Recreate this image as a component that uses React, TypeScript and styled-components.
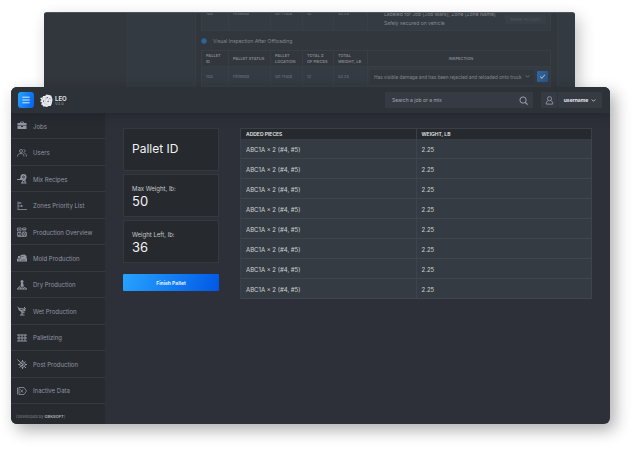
import React from "react";
import styled, { createGlobalStyle } from "styled-components";

const GlobalStyle = createGlobalStyle`
  *, *::before, *::after { box-sizing: border-box; }
  body {
    margin: 0;
    background: #fff;
    font-family: Inter, "Open Sans", sans-serif;
    color: #c9ccd1;
  }
  button, input, select { font-family: inherit; margin: 0; }
  button { cursor: pointer; }
`;

const Stage = styled.div`
  min-height: 100vh;
  display: flex;
  flex-direction: column;
  padding: 12px 25px 26px 11px;
`;

/* ---------- rear window ---------- */

const RearWindow = styled.section`
  height: 75px;
  margin: 0 35px 0 33px;
  display: grid;
  grid-template-columns: 82px 69px minmax(0, 1fr) 17px;
  grid-template-rows: minmax(0, 1fr);
  overflow: hidden;
  border-radius: 3px 3px 0 0;
  border-top: 1px solid #50545a;
  background: #32363d;
  color: #7a7f86;
  box-shadow: 4px 6px 16px rgba(0, 0, 0, 0.24);
`;

const RearPane = styled.div<{ $tinted?: boolean }>`
  background: ${(p) => (p.$tinted ? "#333a41" : "#32363d")};
`;

const RearDialog = styled.div`
  display: flex;
  flex-direction: column;
  justify-content: flex-end;
  padding: 0 6px 0 5px;
  border-left: 1px solid #383e45;
  border-right: 1px solid #383e45;
`;

const RearTable = styled.table`
  width: 100%;
  flex: none;
  table-layout: fixed;
  border-collapse: collapse;
  font-size: 5px;
  line-height: 6px;
`;

const RearHead = styled.th<{ $center?: boolean }>`
  height: 16px;
  padding: 0 0 0 4px;
  border: 1px solid #393e45;
  font-size: 4px;
  font-weight: 600;
  text-align: ${(p) => (p.$center ? "center" : "left")};
  color: #83888e;
`;

const RearCell = styled.td<{ $tall?: boolean }>`
  height: ${(p) => (p.$tall ? 34 : 20)}px;
  padding: 0 2px 0 4px;
  background: #343b42;
  border: 1px solid #393f46;
  font-size: 4px;
`;

const Notes = styled.div`
  display: flex;
  align-items: center;
  justify-content: space-between;
  padding: 11px 2px 0 12px;
`;

const NoteList = styled.ul`
  margin: 0;
  padding: 0;
  list-style: none;
  font-size: 5px;
  line-height: 9px;
  color: #858a90;
`;

const MarkButton = styled.button`
  width: 41px;
  height: 9px;
  padding: 0;
  border: 0;
  border-radius: 1px;
  background: #393f46;
  color: #545a61;
  font-size: 4px;
  line-height: 9px;
`;

const StepLabel = styled.label`
  flex: none;
  height: 19px;
  display: flex;
  align-items: center;
  gap: 6px;
  font-size: 5px;
  color: #858a90;
`;

const StepCheck = styled.input`
  appearance: none;
  width: 6px;
  height: 6px;
  margin: 0;
  border-radius: 50%;
  background: #3c6288;
  border: 1px solid #245a92;
`;

const Decision = styled.div`
  display: flex;
  align-items: center;
  gap: 3px;
  margin-left: -2px;
`;

const DamageField = styled.label`
  flex: 1;
  min-width: 0;
  height: 14px;
  display: flex;
  align-items: center;
  padding: 0 4px;
  background: #32373e;
  border-radius: 1px;
  color: #7f848b;
`;

const DamageSelect = styled.select`
  appearance: none;
  flex: 1;
  min-width: 0;
  padding: 0;
  border: 0;
  background: transparent;
  color: inherit;
  font-family: Roboto, sans-serif;
  font-size: 5px;
  line-height: 8px;
`;

const ConfirmButton = styled.button`
  width: 11px;
  height: 11px;
  padding: 2px;
  display: flex;
  border: 0;
  border-radius: 1px;
  background: linear-gradient(110deg, #31669b, #2a5287);
  color: #a9b6c6;
`;

/* ---------- main window ---------- */

const MainWindow = styled.div`
  position: relative;
  flex: 1;
  display: flex;
  flex-direction: column;
  overflow: hidden;
  border-radius: 6px;
  background: #2d3038;
  box-shadow: 5px 6px 16px rgba(0, 0, 0, 0.32);
`;

const TopBar = styled.header`
  position: relative;
  height: 26px;
  display: flex;
  align-items: center;
  padding: 0 8px 0 7px;
  background: #2d3138;
  box-shadow: 0 2px 10px rgba(25, 28, 38, 0.5);
`;

const MenuButton = styled.button`
  width: 16px;
  height: 16px;
  padding: 4px;
  display: flex;
  border: 0;
  border-radius: 3px;
  background: linear-gradient(110deg, #27a2ff, #0560ea);
  color: #d6ebff;
`;

const Brand = styled.a`
  display: flex;
  align-items: center;
  gap: 2px;
  margin: 0 auto 0 6px;
  color: #dfe1e5;
  text-decoration: none;
`;

const BrandText = styled.span`
  display: flex;
  flex-direction: column;
  padding-top: 2px;
  font-size: 6px;
  font-weight: 700;
  line-height: 6px;
`;

const Version = styled.small`
  font-size: 4px;
  font-weight: 400;
  line-height: 4px;
  color: #8f939b;
`;

const SearchForm = styled.form`
  width: 148px;
  height: 16px;
  display: flex;
  align-items: center;
  margin-right: 8px;
  padding: 0 5px 0 7px;
  background: #363b43;
  border-radius: 1px;
`;

const SearchInput = styled.input`
  flex: 1;
  min-width: 0;
  padding: 0;
  border: 0;
  outline: 0;
  background: transparent;
  color: #c9ccd1;
  font-size: 5px;
  line-height: 8px;
  &::placeholder { color: #a4a8ae; opacity: 1; }
`;

const IconButton = styled.button`
  padding: 0;
  display: flex;
  border: 0;
  background: transparent;
  color: #a4a8af;
`;

const UserButton = styled.button`
  height: 16px;
  display: flex;
  align-items: center;
  padding: 0;
  border: 0;
  border-radius: 1px;
  background: #363b43;
  color: #e3e5e8;
  font-size: 5px;
  font-weight: 700;
`;

const Avatar = styled.span`
  width: 17px;
  height: 16px;
  display: grid;
  place-items: center;
  border-right: 1px solid #2f343b;
  color: #989ca4;
`;

const UserName = styled.span`
  width: 44px;
  display: flex;
  align-items: center;
  justify-content: center;
  gap: 3px;
`;

const Body = styled.div`
  flex: 1;
  display: grid;
  grid-template-columns: 94px minmax(0, 1fr);
`;

const Sidebar = styled.nav`
  display: flex;
  flex-direction: column;
  background: linear-gradient(#272a31, #272a2f 14px);
`;

const NavList = styled.ul`
  flex: 1;
  display: grid;
  grid-auto-rows: minmax(20px, 1fr);
  margin: 0;
  padding: 0;
  list-style: none;
`;

const NavItem = styled.li`
  display: flex;
  border-bottom: 1px solid #363a40;
`;

const NavLink = styled.a`
  flex: 1;
  display: flex;
  align-items: center;
  gap: 6px;
  padding: 1px 0 0 6px;
  color: #9195a2;
  font-size: 6px;
  text-decoration: none;
`;

const Credit = styled.footer`
  height: 20px;
  padding: 9px 0 0 5px;
  font-size: 4px;
  line-height: 8px;
  color: #80848c;
`;

const CreditLink = styled.a`
  color: #a4a7ae;
  font-weight: 700;
  text-decoration: none;
`;

const Content = styled.main`
  display: grid;
  grid-template-columns: 96px minmax(0, 1fr);
  align-items: start;
  gap: 21px;
  padding: 15px 18px;
`;

const Summary = styled.div`
  display: flex;
  flex-direction: column;
  gap: 3px;
`;

const Card = styled.section`
  height: 43px;
  display: flex;
  flex-direction: column;
  justify-content: center;
  padding: 0 8px;
  border: 1px solid #343940;
  background: #26292d;
`;

const CardTitle = styled.h1`
  margin: 0;
  padding-bottom: 2px;
  font-size: 12px;
  font-weight: 400;
  line-height: 14px;
  color: #f1f2f4;
`;

const CardLabel = styled.span`
  padding-top: 3px;
  font-size: 6px;
  line-height: 8px;
  color: #c7c9cd;
`;

const CardValue = styled.strong`
  font-size: 13px;
  font-weight: 400;
  line-height: 16px;
  color: #f1f2f4;
`;

const FinishButton = styled.button`
  height: 17px;
  margin-top: 8px;
  padding: 0;
  border: 0;
  border-radius: 1px;
  background: linear-gradient(110deg, #27a3ff, #0058e6);
  color: #e4f1ff;
  font-size: 5px;
  font-weight: 700;
`;

const Pieces = styled.table`
  width: 100%;
  table-layout: fixed;
  border-collapse: separate;
  border-spacing: 0;
  border-left: 1px solid #3a4047;
`;

const PiecesHead = styled.th`
  height: 11px;
  padding: 0 5px;
  border-top: 1px solid #3a4047;
  border-right: 1px solid #3a4047;
  background: #26292d;
  color: #e4e6e8;
  font-size: 5px;
  font-weight: 600;
  line-height: 6px;
  text-align: left;
`;

const PiecesCell = styled.td`
  height: 20px;
  padding: 2px 5px 0;
  border-right: 1px solid #3d444b;
  border-bottom: 1px solid #3f464d;
  background: #353b42;
  color: #d0d3d6;
  font-size: 6px;
  line-height: 8px;
`;

/* ---------- icons ---------- */

const Glyph = ({ size = 10, children }: { size?: number; children: React.ReactNode }) => (
  <svg
    width={size}
    height={size}
    viewBox="0 0 20 20"
    fill="none"
    stroke="currentColor"
    strokeWidth="1.6"
    aria-hidden="true"
  >
    {children}
  </svg>
);

const Chevron = () => (
  <Glyph size={5}>
    <path d="M3 6l7 7 7-7" strokeWidth="3" />
  </Glyph>
);

const Lion = () => (
  <svg width="13" height="13" viewBox="0 0 26 26" aria-hidden="true">
    <path
      fill="#e6e7ed"
      d="M0 8l5-1 1-3 4 0 3-3 5 1 4 1 2 4 1 5-1 5-1 4-2 3-4 0-3 2-4-1-4 0-1-3-3-1 2-4-4-2 3-3z"
    />
    <path
      fill="#4a4e59"
      d="M13 7l3-1 0 2-3 1zM19 8l2 1-1 2-1-1zM6 12l2 2-1 3-1-2zM15 14l3 0-1 2-2 0zM4 8l3 1-2 0z"
    />
    <path stroke="#a9acb6" fill="none" d="M10 7l1 3-1 3 2 3M17 10l0 3M8 18l3 1M12 20l3 1M21 14l1 3" />
  </svg>
);

const navigation: { label: string; icon: React.ReactNode }[] = [
  {
    label: "Jobs",
    icon: (
      <>
        <path d="M7 4V2h6v2" />
        <path d="M1 4h18v5H1zM1 10h7v2h4v-2h7v6H1z" fill="currentColor" stroke="none" />
      </>
    ),
  },
  {
    label: "Users",
    icon: (
      <>
        <circle cx="8" cy="6" r="3" />
        <path d="M1 17c0-4 3-6 7-6s6 2 6 6M13 3c4 0 4 6 0 6M15 11c3 0 4 3 4 6" />
      </>
    ),
  },
  {
    label: "Mix Recipes",
    icon: (
      <>
        <circle cx="13" cy="6" r="6" fill="currentColor" stroke="none" />
        <path d="M0 11h9M6 8l5 5M16 10v5M8 18h11M10 18l2-5h3l2 5" strokeWidth="2" />
        <circle cx="13" cy="6" r="2" stroke="#272a2f" />
      </>
    ),
  },
  {
    label: "Zones Priority List",
    icon: <path d="M2 1v17M2 4h7M2 10h10M2 17h18M6 2v4M9 8v4" />,
  },
  {
    label: "Production Overview",
    icon: (
      <>
        <path d="M1 2h7v6H1zM1 11h7v6H1zM11 2h7v3h-7zM11 8h7M11 11h3v6h-3zM16 11h3v6h-3zM1 19h18" />
        <path d="M3 5h3M3 14h3" />
      </>
    ),
  },
  {
    label: "Mold Production",
    icon: (
      <>
        <path d="M0 11h20v6H0zM7 4l8-1 4 3v5H7zM2 6h4v4H2z" fill="currentColor" stroke="none" />
        <path d="M9 7h4M3 14h3M8 14h9" stroke="#272a2f" strokeWidth="1" />
      </>
    ),
  },
  {
    label: "Dry Production",
    icon: (
      <>
        <circle cx="10" cy="3" r="3" fill="currentColor" stroke="none" />
        <path d="M8 6h4l2 7H7z" fill="currentColor" stroke="none" />
        <path d="M1 18l4-5 3 5M12 18l3-4 4 4M0 18h20M10 12v5" strokeWidth="2" />
      </>
    ),
  },
  {
    label: "Wet Production",
    icon: (
      <>
        <path d="M3 4l13 1 1 5-8 2-6-4z" fill="currentColor" stroke="none" />
        <path d="M1 2l5 4M14 2l4 4M10 11v7M6 18h9M9 14l6-1" strokeWidth="2" />
        <path d="M7 7l6 1" stroke="#272a2f" />
      </>
    ),
  },
  {
    label: "Palletizing",
    icon: <path d="M0 4h20M0 10h20M0 16h20M4 3v13M10 3v13M16 3v13" strokeWidth="2" />,
  },
  {
    label: "Post Production",
    icon: (
      <>
        <circle cx="11" cy="11" r="5.500" strokeWidth="2" />
        <path d="M11 2v4M11 16v4M2 11h4M16 11h4M17 5l-2 2M5 17l2-2M15 15l3 3M1 1l11 11M12 8v5H8" strokeWidth="2" />
      </>
    ),
  },
  {
    label: "Inactive Data",
    icon: <path d="M1 3v14M4 3h10l5 7-5 7H4zM7 7l5 6M12 7l-5 6" />,
  },
];

const pieces = Array.from({ length: 8 }, () => ({ name: "ABC1A × 2 (#4, #5)", weight: "2.25" }));

const RearColumns = () => (
  <colgroup>
    <col width="27" />
    <col width="42" />
    <col width="32" />
    <col width="31" />
    <col width="34" />
    <col />
  </colgroup>
);

const RearValues = ({ tall }: { tall?: boolean }) => (
  <>
    {["100", "Finished", "On Truck", "12", "52.25"].map((value) => (
      <RearCell key={value} $tall={tall}>
        {value}
      </RearCell>
    ))}
  </>
);

export default function App() {
  return (
    <Stage>
      <GlobalStyle />
      <RearWindow aria-label="Pallet inspection">
        <RearPane />
        <RearPane $tinted />
        <RearDialog>
          <RearTable>
            <RearColumns />
            <tbody>
              <tr>
                <RearValues tall />
                <RearCell $tall>
                  <Notes>
                    <NoteList>
                      <li>Labeled for Job [Job Mark], Zone [Zone Name]</li>
                      <li>Safely secured on vehicle</li>
                    </NoteList>
                    <MarkButton type="button">MARK AS LOST</MarkButton>
                  </Notes>
                </RearCell>
              </tr>
            </tbody>
          </RearTable>
          <StepLabel>
            <StepCheck type="checkbox" defaultChecked />
            Visual Inspection After Offloading
          </StepLabel>
          <RearTable>
            <RearColumns />
            <thead>
              <tr>
                <RearHead>PALLET<br />ID</RearHead>
                <RearHead>PALLET STATUS</RearHead>
                <RearHead>PALLET<br />LOCATION</RearHead>
                <RearHead>TOTAL #<br />OF PIECES</RearHead>
                <RearHead>TOTAL<br />WEIGHT, LB</RearHead>
                <RearHead $center>INSPECTION</RearHead>
              </tr>
            </thead>
            <tbody>
              <tr>
                <RearValues />
                <RearCell>
                  <Decision>
                    <DamageField>
                      <DamageSelect aria-label="Inspection result">
                        <option>Has visible damage and has been rejected and reloaded onto truck</option>
                      </DamageSelect>
                      <Chevron />
                    </DamageField>
                    <ConfirmButton type="button" aria-label="Confirm">
                      <Glyph size={7}>
                        <path d="M3 10l5 5 9-10" strokeWidth="3" />
                      </Glyph>
                    </ConfirmButton>
                  </Decision>
                </RearCell>
              </tr>
            </tbody>
          </RearTable>
        </RearDialog>
        <RearPane $tinted />
      </RearWindow>

      <MainWindow>
        <TopBar>
          <MenuButton type="button" aria-label="Menu">
            <Glyph size={8}>
              <path d="M1 3h18M1 10h18M1 17h18" strokeWidth="2.500" />
            </Glyph>
          </MenuButton>
          <Brand href="#">
            <Lion />
            <BrandText>
              LEO
              <Version>V3.0</Version>
            </BrandText>
          </Brand>
          <SearchForm role="search" onSubmit={(event) => event.preventDefault()}>
            <SearchInput type="text" aria-label="Search" placeholder="Search a job or a mix" />
            <IconButton type="submit" aria-label="Search">
              <Glyph size={9}>
                <circle cx="9" cy="9" r="7" strokeWidth="2" />
                <path d="M14 14l5 5" strokeWidth="2.500" />
              </Glyph>
            </IconButton>
          </SearchForm>
          <UserButton type="button">
            <Avatar>
              <Glyph size={9}>
                <circle cx="10" cy="6" r="4.500" strokeWidth="2" />
                <path d="M7 10c-3 2-5 5-4 8h14c1-3-1-6-4-8" strokeWidth="2" />
              </Glyph>
            </Avatar>
            <UserName>
              username
              <Chevron />
            </UserName>
          </UserButton>
        </TopBar>

        <Body>
          <Sidebar aria-label="Main">
            <NavList>
              {navigation.map(({ label, icon }) => (
                <NavItem key={label}>
                  <NavLink href="#">
                    <Glyph>{icon}</Glyph>
                    {label}
                  </NavLink>
                </NavItem>
              ))}
            </NavList>
            <Credit>
              [Developed by <CreditLink href="#">GBKSOFT</CreditLink>]
            </Credit>
          </Sidebar>

          <Content>
            <Summary>
              <Card>
                <CardTitle>Pallet ID</CardTitle>
              </Card>
              <Card>
                <CardLabel>Max Weight, lb:</CardLabel>
                <CardValue>50</CardValue>
              </Card>
              <Card>
                <CardLabel>Weight Left, lb:</CardLabel>
                <CardValue>36</CardValue>
              </Card>
              <FinishButton type="button">Finish Pallet</FinishButton>
            </Summary>

            <Pieces>
              <thead>
                <tr>
                  <PiecesHead>ADDED PIECES</PiecesHead>
                  <PiecesHead>WEIGHT, LB</PiecesHead>
                </tr>
              </thead>
              <tbody>
                {pieces.map((piece, index) => (
                  <tr key={index}>
                    <PiecesCell>{piece.name}</PiecesCell>
                    <PiecesCell>{piece.weight}</PiecesCell>
                  </tr>
                ))}
              </tbody>
            </Pieces>
          </Content>
        </Body>
      </MainWindow>
    </Stage>
  );
}
